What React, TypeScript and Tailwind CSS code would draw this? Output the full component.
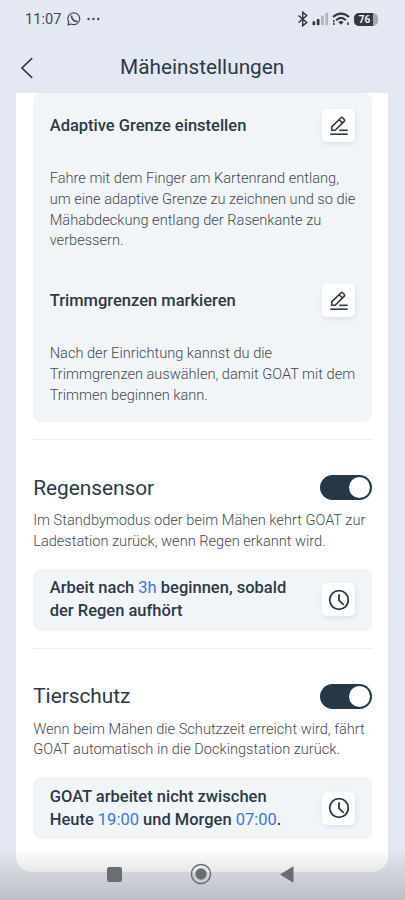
import type { ReactNode } from "react";

const PencilIcon = () => (
  <svg width="20" height="20" viewBox="0 0 20 20" fill="none" stroke="#2f3b47" strokeWidth="1.6">
    <path d="M1.3 18.2h17.4" strokeWidth="1.6" />
    <path d="M10.2 14.3h8.5" />
    <path
      d="M2.7 14.3v-3.4L12 1.8c.5-.5 1.1-.5 1.6 0l1.7 1.7c.5.5.5 1.1 0 1.6L6.2 14.3H2.7z"
      strokeLinejoin="round"
    />
    <path d="M10.2 3.7l3.3 3.3" />
  </svg>
);

const ClockIcon = () => (
  <svg width="22" height="22" viewBox="0 0 22 22" fill="none" stroke="#2b3743" strokeWidth="1.8">
    <circle cx="11" cy="11" r="9.3" />
    <path d="M11 5.3v6l4.8 4.5" />
  </svg>
);

const IconButton = ({ label, children }: { label: string; children: ReactNode }) => (
  <button
    aria-label={label}
    className="flex size-[33px] shrink-0 items-center justify-center rounded-[5px] bg-white shadow-[1px_2px_5px_rgba(40,60,80,0.10)]">
    {children}
  </button>
);

const Toggle = () => (
  <button
    role="switch"
    aria-checked="true"
    className="flex h-[25px] w-[52px] items-center justify-end rounded-full bg-[#263746] pr-[2px]">
    <span className="size-[21px] rounded-full bg-white" />
  </button>
);

const Highlight = ({ children }: { children: ReactNode }) => (
  <span className="font-normal text-[#3c74e4]">{children}</span>
);

const StatusBar = () => (
  <div className="flex h-[38px] items-center justify-between pl-[25px] pr-[27px] text-[#414750]">
    <div className="flex items-center">
      <span className="w-[36px] whitespace-nowrap pt-px text-[14.6px]">11:07</span>
      <svg className="ml-[6px]" width="14" height="14" viewBox="0 0 14 14" fill="none" stroke="currentColor">
        <path d="M1 13l.8-3.1A5.9 5.9 0 1 1 4.1 12L1 13z" strokeWidth="1.2" strokeLinejoin="round" />
        <path d="M4.6 4.2c-.3 2.7 2.7 5.5 5.1 5.1" strokeWidth="1.7" strokeLinecap="round" />
      </svg>
      <svg className="ml-[6px]" width="13" height="4" viewBox="0 0 13 4" fill="currentColor">
        <circle cx="1.6" cy="2" r="1.2" />
        <circle cx="6.4" cy="2" r="1.2" />
        <circle cx="11.2" cy="2" r="1.2" />
      </svg>
    </div>
    <div className="flex items-center text-[#343940]">
      <svg width="12" height="16" viewBox="0 0 12 16" fill="none" stroke="currentColor" strokeWidth="1.5">
        <path d="M1.5 4.5l8.2 7-4 3.3V1.2l4 3.3-8.2 7" />
      </svg>
      <svg className="ml-[3px]" width="17" height="14" viewBox="0 0 17 14">
        <g fill="currentColor">
          <rect x="0.5" y="9.3" width="2.7" height="4" rx=".7" />
          <rect x="4.8" y="7" width="2.7" height="6.3" rx=".7" />
        </g>
        <g fill="#afb4bd">
          <rect x="9.1" y="3.8" width="2.7" height="9.5" rx=".7" />
          <rect x="13.4" y="0.8" width="2.7" height="12.5" rx=".7" />
        </g>
      </svg>
      <svg className="ml-[3px]" width="18" height="14" viewBox="0 0 18 14" fill="none" stroke="currentColor" strokeWidth="2.1">
        <path d="M1 5.1c4.6-4.7 11.4-4.7 16 0" />
        <path d="M4.1 8.2c3-2.8 6.8-2.8 9.8 0" />
        <path d="M9 12.7L6.3 10c1.6-1.3 3.8-1.3 5.4 0z" fill="currentColor" stroke="none" />
        <path d="M1.8 8v2.2M1.8 11v2M15.9 10.2v2.8" strokeWidth="1.5" />
      </svg>
      <div className="ml-[4px] flex h-[13px] w-[24px] overflow-hidden rounded-[5px] bg-[#a5aab2] text-white">
        <span className="flex w-[19px] items-center justify-center bg-[#343940] pl-[2px] text-[10px] font-semibold">76</span>
      </div>
    </div>
  </div>
);

const EditItem = ({ title, lines }: { title: string; lines: string[] }) => (
  <div>
    <div className="flex h-[33px] items-center justify-between">
      <h3 className="whitespace-nowrap pt-[2px] text-[16.5px] font-medium">{title}</h3>
      <IconButton label={title}>
        <PencilIcon />
      </IconButton>
    </div>
    <Description className="mt-[26px]" lines={lines} />
  </div>
);

const Description = ({ lines, className }: { lines: string[]; className: string }) => (
  <p className={`whitespace-nowrap text-[14.6px] font-light leading-[20.8px] text-[#3f4a55] ${className}`}>
    {lines.map((line) => (
      <span key={line} className="block">
        {line}
      </span>
    ))}
  </p>
);

const Section = ({ title, lines, children }: { title: string; lines: string[]; children: ReactNode }) => (
  <section className="h-[208.5px] border-t border-[#edf0f2] pt-[35px]">
    <div className="flex h-[25px] items-center justify-between">
      <h2 className="pt-[2px] text-[20.8px]">{title}</h2>
      <Toggle />
    </div>
    <Description className="mt-[10px]" lines={lines} />
    <div className="mt-[17px] flex h-[62px] items-center justify-between rounded-[8px] bg-[#f2f5f8] pl-[16.5px] pr-[16.5px]">
      <p className="whitespace-nowrap pt-px text-[16.5px] font-medium leading-[22.8px]">{children}</p>
      <IconButton label={title}>
        <ClockIcon />
      </IconButton>
    </div>
  </section>
);

const App = () => {
  return (
    <div className="relative h-[900px] w-[405px] overflow-hidden bg-[#e4e8f2] font-['Roboto','Liberation_Sans',sans-serif] text-[#2c3946]">
      <StatusBar />

      {/* Header */}
      <header className="flex h-[55px] items-center pl-[20px] pt-[4px]">
        <svg width="14" height="22" viewBox="0 0 14 22" fill="none" stroke="#333d48" strokeWidth="1.7">
          <path d="M12.2 1.2L2 11l10.2 9.8" />
        </svg>
        <h1 className="ml-[86px] whitespace-nowrap pt-px text-[20.8px]">Mäheinstellungen</h1>
      </header>

      {/* Settings */}
      <main className="ml-[16.4px] h-[779px] w-[372px] rounded-b-[16px] bg-white px-[16.8px]">
        <div className="flex h-[329px] flex-col gap-[33px] rounded-[8px] bg-[#f2f5f8] pl-[16.5px] pr-[16.5px] pt-[16px]">
          <EditItem
            title="Adaptive Grenze einstellen"
            lines={[
              "Fahre mit dem Finger am Kartenrand entlang,",
              "um eine adaptive Grenze zu zeichnen und so die",
              "Mähabdeckung entlang der Rasenkante zu",
              "verbessern.",
            ]}
          />
          <EditItem
            title="Trimmgrenzen markieren"
            lines={[
              "Nach der Einrichtung kannst du die",
              "Trimmgrenzen auswählen, damit GOAT mit dem",
              "Trimmen beginnen kann.",
            ]}
          />
        </div>

        <div className="pt-[17px]">
          <Section
            title="Regensensor"
            lines={["Im Standbymodus oder beim Mähen kehrt GOAT zur", "Ladestation zurück, wenn Regen erkannt wird."]}>
            Arbeit nach <Highlight>3h</Highlight> beginnen, sobald
            <br />
            der Regen aufhört
          </Section>
          <Section
            title="Tierschutz"
            lines={["Wenn beim Mähen die Schutzzeit erreicht wird, fährt", "GOAT automatisch in die Dockingstation zurück."]}>
            GOAT arbeitet nicht zwischen
            <br />
            Heute <Highlight>19:00</Highlight> und Morgen <Highlight>07:00</Highlight>.
          </Section>
        </div>
      </main>

      {/* System navigation, drawn over the page */}
      <nav className="absolute inset-x-0 bottom-0 flex h-[52px] items-center bg-linear-to-b from-[#80808000] to-[#80808066] pl-[107px]">
        <svg width="15" height="15" viewBox="0 0 15 15">
          <rect width="15" height="15" rx="2.2" fill="#6c6d6f" />
        </svg>
        <svg className="ml-[68px]" width="22" height="22" viewBox="0 0 22 22">
          <circle cx="11" cy="11" r="9.6" fill="none" stroke="#6c6d6f" strokeWidth="1.5" />
          <circle cx="11" cy="11" r="5.7" fill="#6c6d6f" />
        </svg>
        <svg className="ml-[68px]" width="14" height="17" viewBox="0 0 14 17">
          <path d="M13 1v15L.8 8.5z" fill="#6c6d6f" stroke="#6c6d6f" strokeLinejoin="round" />
        </svg>
      </nav>
    </div>
  );
};

export default App;
